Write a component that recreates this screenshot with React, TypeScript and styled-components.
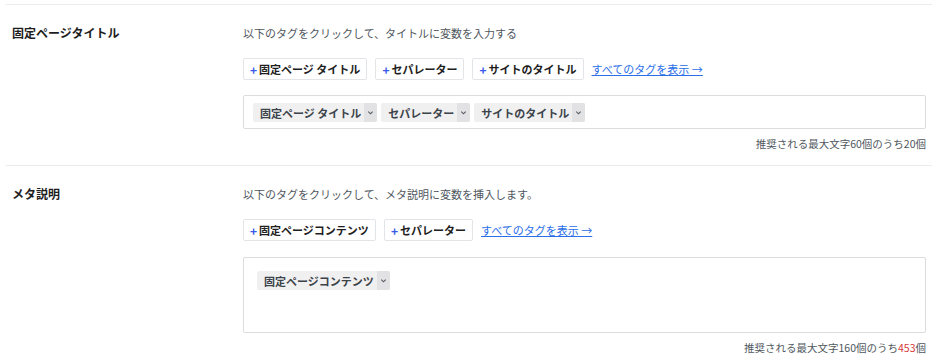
import React from "react";
import styled, { createGlobalStyle } from "styled-components";

const GlobalStyle = createGlobalStyle`
    body {
        margin: 0;
        background: #fff;
        font-family: "Noto Sans CJK JP", "Noto Sans", sans-serif;
        color: #1e1e1e;
    }
`;

const Page = styled.div`
    padding: 4px 17px 0 6px;
`;

const Section = styled.section`
    display: grid;
    grid-template-columns: 237px 1fr;
    border-top: 1px solid #ececec;
    padding: 20px 6px 13px 0;
`;

const Label = styled.h3`
    margin: 0;
    padding-left: 6px;
    font-size: 12px;
    font-weight: 700;
    line-height: 16px;
`;

const Body = styled.div`
    display: flex;
    flex-direction: column;
`;

const Hint = styled.p`
    margin: 0;
    font-size: 11px;
    line-height: 16px;
    color: #50575e;
`;

const TagRow = styled.div`
    display: flex;
    align-items: center;
    gap: 8px;
    margin-top: 17px;
`;

const TagButton = styled.button`
    height: 22px;
    padding: 0 6px;
    background: #fff;
    border: 1px solid #e2e4e7;
    border-radius: 2px;
    font-family: inherit;
    font-size: 11px;
    font-weight: 700;
    color: #1e1e1e;
    display: flex;
    align-items: center;
    gap: 2px;
    cursor: pointer;
    span {
        color: #3858e9;
        font-size: 12px;
    }
`;

const ShowAll = styled.a`
    font-size: 11px;
    color: #2a6ee8;
    text-decoration: underline;
    cursor: pointer;
`;

const Field = styled.div<{ $tall?: boolean }>`
    margin-top: ${(p) => (p.$tall ? 16 : 15)}px;
    border: 1px solid #dcdcde;
    border-radius: 2px;
    padding: ${(p) => (p.$tall ? "13px 13px" : "7px 9px")};
    box-sizing: border-box;
    height: ${(p) => (p.$tall ? 76 : 34)}px;
    display: flex;
    align-items: flex-start;
    gap: 4px;
`;

const Chip = styled.div`
    display: flex;
    align-items: stretch;
    height: 19px;
    background: #f0f0f1;
    border-radius: 2px;
    font-size: 11px;
    font-weight: 700;
    color: #3c434a;
`;

const ChipText = styled.span`
    display: flex;
    align-items: center;
    padding: 0 3px 0 7px;
`;

const ChipCaret = styled.span`
    width: 13px;
    display: flex;
    align-items: center;
    justify-content: center;
    background: #e2e2e4;
    border-radius: 0 2px 2px 0;
    svg {
        width: 7px;
        height: 7px;
    }
`;

const Counter = styled.div`
    margin-top: 7px;
    text-align: right;
    font-size: 10.5px;
    line-height: 16px;
    color: #50575e;
    em {
        font-style: normal;
        color: #d63638;
    }
`;

const Caret = () => (
    <svg viewBox="0 0 8 8" fill="none" stroke="#50575e" strokeWidth="1.2">
        <path d="M1.5 3 L4 5.5 L6.5 3" />
    </svg>
);

const Tag = ({ label }: { label: string }) => (
    <Chip>
        <ChipText>{label}</ChipText>
        <ChipCaret>
            <Caret />
        </ChipCaret>
    </Chip>
);

export default function App() {
    return (
        <>
            <GlobalStyle />
            <Page>
                <Section>
                    <Label>固定ページタイトル</Label>
                    <Body>
                        <Hint>以下のタグをクリックして、タイトルに変数を入力する</Hint>
                        <TagRow>
                            <TagButton>
                                <span>+</span>固定ページ タイトル
                            </TagButton>
                            <TagButton>
                                <span>+</span>セパレーター
                            </TagButton>
                            <TagButton>
                                <span>+</span>サイトのタイトル
                            </TagButton>
                            <ShowAll>すべてのタグを表示 →</ShowAll>
                        </TagRow>
                        <Field>
                            <Tag label="固定ページ タイトル" />
                            <Tag label="セパレーター" />
                            <Tag label="サイトのタイトル" />
                        </Field>
                        <Counter>推奨される最大文字60個のうち20個</Counter>
                    </Body>
                </Section>
                <Section>
                    <Label>メタ説明</Label>
                    <Body>
                        <Hint>以下のタグをクリックして、メタ説明に変数を挿入します。</Hint>
                        <TagRow>
                            <TagButton>
                                <span>+</span>固定ページコンテンツ
                            </TagButton>
                            <TagButton>
                                <span>+</span>セパレーター
                            </TagButton>
                            <ShowAll>すべてのタグを表示 →</ShowAll>
                        </TagRow>
                        <Field $tall>
                            <Tag label="固定ページコンテンツ" />
                        </Field>
                        <Counter>
                            推奨される最大文字160個のうち<em>453</em>個
                        </Counter>
                    </Body>
                </Section>
            </Page>
        </>
    );
}
